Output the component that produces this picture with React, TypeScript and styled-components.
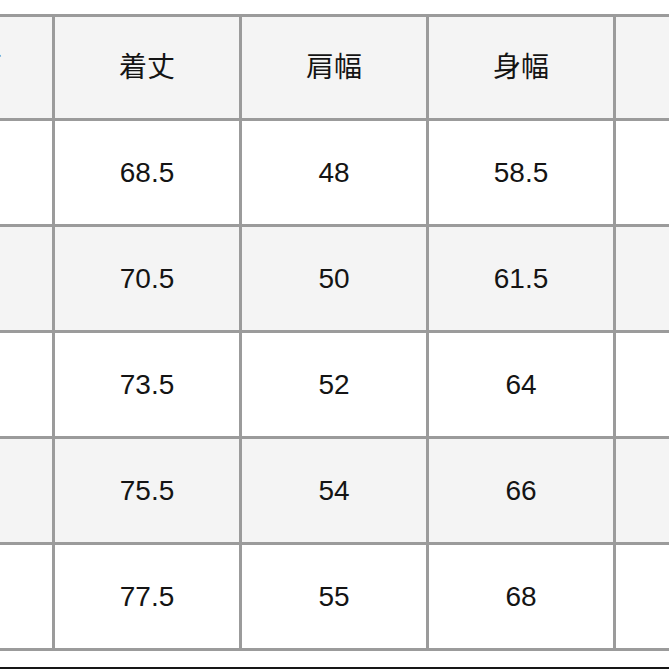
import React from "react";
import styled, { createGlobalStyle } from "styled-components";

const Global = createGlobalStyle`
  html, body { margin: 0; padding: 0; background: #ffffff; }
  body { font-family: "Liberation Sans", Arial, sans-serif; }
`;

const Page = styled.div`
  width: 669px;
  height: 669px;
  overflow: hidden;
  padding-top: 14px;
  box-sizing: border-box;
  display: flex;
  flex-direction: column;
  background: #ffffff;
`;

const Table = styled.div`
  margin-left: -126px;
  display: grid;
  grid-template-columns: 178px 184px 184px 184px 184px;
  grid-template-rows: 101px repeat(5, 103px);
  gap: 3px;
  padding: 3px 0;
  background: #9b9b9b;
  width: max-content;
`;

const Cell = styled.div<{ $shade: boolean; $head?: boolean; $lead?: boolean }>`
  background: ${(p) => (p.$shade ? "#f4f4f4" : "#ffffff")};
  display: flex;
  align-items: center;
  justify-content: center;
  padding-right: ${(p) => (p.$lead ? "5px" : "0")};
  padding-bottom: ${(p) => (p.$head ? "5px" : "0")};
  color: #141414;
  font-family: ${(p) =>
    p.$head
      ? '"Noto Sans CJK JP", "Noto Sans", sans-serif'
      : '"Liberation Sans", Arial, sans-serif'};
  font-size: 28px;
  font-weight: 400;
  white-space: nowrap;
`;

const BottomRule = styled.div`
  margin-top: auto;
  height: 2px;
  background: #161616;
`;

const headers = ["サイズ", "着丈", "肩幅", "身幅", ""];
const rows = [
  ["", "68.5", "48", "58.5", ""],
  ["", "70.5", "50", "61.5", ""],
  ["", "73.5", "52", "64", ""],
  ["", "75.5", "54", "66", ""],
  ["", "77.5", "55", "68", ""],
];

export default function App() {
  return (
    <>
      <Global />
      <Page>
        <Table>
          {headers.map((h, i) => (
            <Cell key={"h" + i} $shade $head $lead={i === 0}>
              {h}
            </Cell>
          ))}
          {rows.map((r, ri) =>
            r.map((v, ci) => (
              <Cell key={ri + "-" + ci} $shade={ri % 2 === 1}>
                {v}
              </Cell>
            ))
          )}
        </Table>
        <BottomRule />
      </Page>
    </>
  );
}
